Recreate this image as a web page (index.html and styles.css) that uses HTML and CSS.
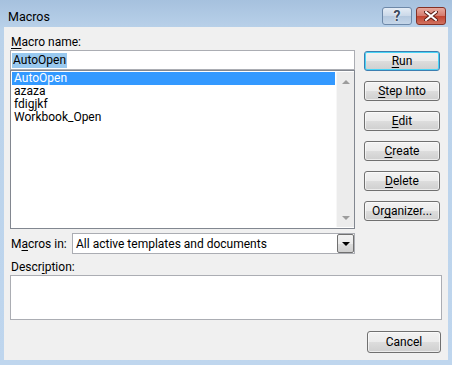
FILE: index.html
```html
<!DOCTYPE html>
<html lang="en">

<head>
    <meta charset="UTF-8">
    <title>Macros</title>
    <link rel="stylesheet" href="styles.css">
</head>

<body>
    <div class="window">
        <div class="titlebar">
            <span class="title">Macros</span>
            <div class="caption-btns">
                <div class="cap help">?</div>
                <div class="cap close">
                    <svg width="14" height="10" viewBox="0 0 14 10">
                        <path d="M2 1 L12 9 M12 1 L2 9" stroke="#5a1d16" stroke-width="4" stroke-linecap="square" />
                        <path d="M2 1 L12 9 M12 1 L2 9" stroke="#fff" stroke-width="2" stroke-linecap="square" />
                    </svg>
                </div>
            </div>
        </div>

        <div class="client">
            <div class="top">
                <div class="left">
                    <div class="label"><u>M</u>acro name:</div>
                    <div class="namebox"><span class="sel">AutoOpen</span></div>
                    <div class="listbox">
                        <ul class="items">
                            <li class="active">AutoOpen</li>
                            <li>azaza</li>
                            <li>fdigjkf</li>
                            <li>Workbook_Open</li>
                        </ul>
                        <div class="scroll">
                            <span class="arrow up"></span>
                            <span class="arrow down"></span>
                        </div>
                    </div>
                </div>
                <div class="buttons">
                    <div class="btn default"><u>R</u>un</div>
                    <div class="btn"><u>S</u>tep Into</div>
                    <div class="btn"><u>E</u>dit</div>
                    <div class="btn"><u>C</u>reate</div>
                    <div class="btn"><u>D</u>elete</div>
                    <div class="btn">Or<u>g</u>anizer...</div>
                </div>
            </div>

            <div class="macros-in">
                <span class="label-in">M<u>a</u>cros in:</span>
                <div class="combo">
                    <span>All active templates and documents</span>
                    <div class="combo-btn"><span class="tri"></span></div>
                </div>
            </div>

            <div class="label desc-label">Descr<u>i</u>ption:</div>
            <div class="desc"></div>

            <div class="footer">
                <div class="btn cancel">Cancel</div>
            </div>
        </div>
    </div>
</body>

</html>
```

FILE: styles.css
```css
* {
    margin: 0;
    padding: 0;
    list-style: none;
    box-sizing: border-box;
}

body {
    font-family: Roboto, "Noto Sans", sans-serif;
    font-size: 12px;
    color: #000;
}

u {
    text-decoration: underline;
    text-underline-offset: 2px;
}

.window {
    width: 452px;
    height: 365px;
    background: linear-gradient(#a6c1de, #bad2ea 30px, #bfd6ee);
    padding: 0 4px 5px 4px;
    display: flex;
    flex-direction: column;
}

/* title bar */
.titlebar {
    height: 27px;
    display: flex;
    justify-content: space-between;
    align-items: flex-start;
}

.title {
    font-size: 12.5px;
    padding: 9px 0 0 4px;
    color: #000;
}

.caption-btns {
    display: flex;
    gap: 4px;
    padding-top: 7px;
    margin-right: 2px;
}

.cap {
    width: 30px;
    height: 18px;
    border-radius: 3px;
    display: flex;
    align-items: center;
    justify-content: center;
}

.help {
    background: linear-gradient(#e4ecf5, #cad8e8 50%, #b4c8de 51%, #c5d6e9);
    border: 1px solid #6d88a8;
    font-weight: bold;
    font-size: 14px;
    color: #3a4a5e;
    text-shadow: 0 0 2px #fff, 0 0 1px #fff;
}

.close {
    width: 30px;
    background: linear-gradient(#e7a99e, #d47a6c 50%, #c2432f 51%, #d07260);
    border: 1px solid #843226;
}

/* client area */
.client {
    flex: 1;
    background: #f0f0f0;
    padding: 6px 6px 0 6px;
}

.top {
    display: flex;
    gap: 9px;
}

.left {
    width: 345px;
}

.label {
    height: 17px;
    padding: 2px 0 0 1px;
    line-height: 15px;
}

.namebox {
    height: 20px;
    background: #fff;
    border: 1px solid #abadb3;
    padding: 1px 1px;
    line-height: 16px;
}

.sel {
    background: #99c9ef;
    display: inline-block;
    padding: 0 1px;
    line-height: 15px;
}

.listbox {
    height: 159px;
    background: #fff;
    border: 1px solid #828790;
    display: flex;
    padding: 1px 0 1px 1px;
}

.items {
    flex: 1;
}

.items li {
    height: 13px;
    line-height: 13px;
    padding-left: 2px;
}

.items li.active {
    background: #3399ff;
    color: #fff;
    margin-right: 1px;
}

.scroll {
    width: 18px;
    background: #ececec;
    border-left: 1px solid #f7f7f7;
    display: flex;
    flex-direction: column;
    justify-content: space-between;
    align-items: center;
    padding: 8px 0 7px;
}

.arrow {
    width: 0;
    height: 0;
    border-left: 4px solid transparent;
    border-right: 4px solid transparent;
}

.arrow.up {
    border-bottom: 4px solid #9c9c9c;
}

.arrow.down {
    border-top: 4px solid #9c9c9c;
}

.buttons {
    padding-top: 18px;
    display: flex;
    flex-direction: column;
    gap: 10px;
}

.btn {
    width: 76px;
    height: 20px;
    border: 1px solid #707070;
    border-radius: 3px;
    background: linear-gradient(#f2f2f2, #ebebeb 50%, #dddddd 51%, #cfcfcf);
    text-align: center;
    line-height: 18px;
    box-shadow: inset 0 0 0 1px rgba(255, 255, 255, 0.6);
}

.btn.default {
    border-color: #3c7fb1;
    box-shadow: inset 0 0 0 1px #48d4f6;
}

/* macros in */
.macros-in {
    display: flex;
    align-items: center;
    margin-top: 4px;
}

.label-in {
    width: 62px;
    padding-left: 1px;
}

.combo {
    width: 283px;
    height: 21px;
    background: #fff;
    border: 1px solid #abadb3;
    display: flex;
    justify-content: space-between;
    align-items: center;
    padding-left: 3px;
}

.combo-btn {
    width: 17px;
    height: 19px;
    border: 1px solid #707070;
    border-radius: 2px;
    background: linear-gradient(#f2f2f2, #ebebeb 50%, #dddddd 51%, #cfcfcf);
    display: flex;
    align-items: center;
    justify-content: center;
}

.tri {
    width: 0;
    height: 0;
    border-left: 4px solid transparent;
    border-right: 4px solid transparent;
    border-top: 4px solid #000;
}

.desc-label {
    margin-top: 4px;
}

.desc {
    height: 45px;
    background: #fff;
    border: 1px solid #abadb3;
}

.footer {
    display: flex;
    justify-content: flex-end;
    margin-top: 11px;
    padding-right: 1px;
}

.btn.cancel {
    width: 74px;
    height: 22px;
    line-height: 20px;
}
```
